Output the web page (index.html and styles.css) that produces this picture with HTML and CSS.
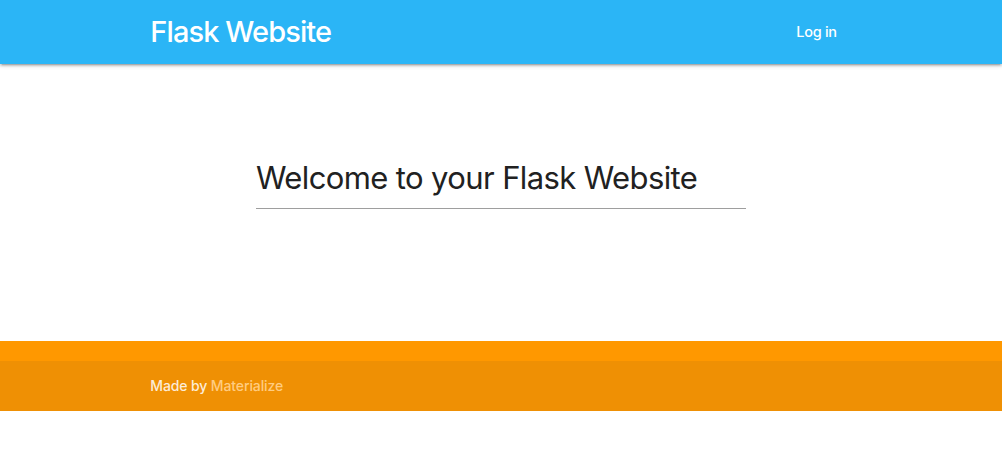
FILE: index.html
```html
<!DOCTYPE html>
<html lang="en">
<head>
<meta charset="utf-8">
<title>Flask Website</title>
<link rel="stylesheet" href="styles.css">
</head>
<body>
<nav class="navbar">
  <div class="container nav-inner">
    <a class="brand" href="#">Flask Website</a>
    <ul class="nav-links">
      <li><a href="#">Log in</a></li>
    </ul>
  </div>
</nav>
<main class="main">
  <h4 class="welcome">Welcome to your Flask Website</h4>
</main>
<footer class="page-footer">
  <div class="footer-copyright">
    <div class="container">Made by <a class="footer-link" href="#">Materialize</a></div>
  </div>
</footer>
</body>
</html>
```

FILE: styles.css
```css
html, body {
  margin: 0;
  padding: 0;
  background: #fff;
}

body {
  font-family: Inter, "Noto Sans", "Liberation Sans", sans-serif;
  color: rgba(0, 0, 0, 0.87);
}

a {
  text-decoration: none;
}

.container {
  width: 70%;
  margin: 0 auto;
}

.navbar {
  height: 64px;
  background: #2bb5f6;
  box-shadow: 0 2px 2px 0 rgba(0, 0, 0, 0.14), 0 3px 1px -2px rgba(0, 0, 0, 0.12), 0 1px 5px 0 rgba(0, 0, 0, 0.2);
  position: relative;
}

.nav-inner {
  display: flex;
  justify-content: space-between;
  align-items: center;
  height: 64px;
}

.brand {
  color: #fff;
  font-size: 29px;
  line-height: 64px;
  letter-spacing: -0.9px;
  font-weight: 500;
}

.nav-links {
  list-style: none;
  margin: 0;
  padding: 0;
  display: flex;
}

.nav-links a {
  display: block;
  color: #fff;
  font-size: 14.5px;
  font-weight: 500;
  line-height: 64px;
  padding: 0 15px;
  letter-spacing: -0.3px;
}

.main {
  padding-top: 94px;
  height: 183px;
}

.welcome {
  width: 490px;
  margin: 0 auto;
  font-size: 31px;
  font-weight: 400;
  line-height: 40px;
  padding-bottom: 10px;
  border-bottom: 1px solid #9e9e9e;
  color: #212121;
  letter-spacing: -0.62px;
}

.page-footer {
  background: #ff9800;
  padding-top: 20px;
}

.footer-copyright {
  background: #ef9004;
  height: 50px;
  line-height: 50px;
  font-size: 14px;
  font-weight: 500;
  letter-spacing: -0.12px;
  color: rgba(255, 255, 255, 0.85);
}

.footer-link {
  color: #ffcc80;
}
```
